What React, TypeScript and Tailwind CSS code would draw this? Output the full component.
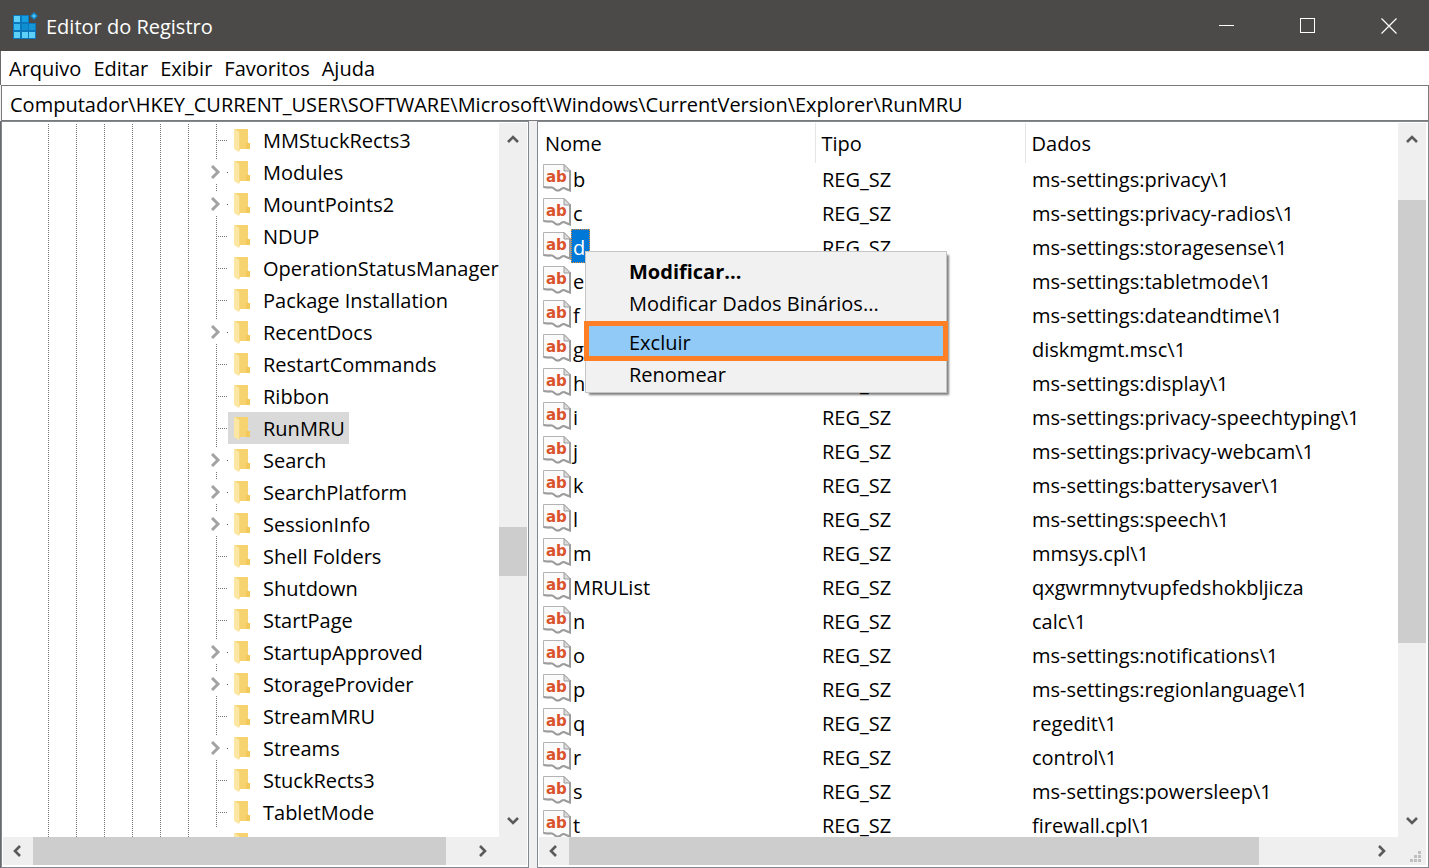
import { ReactNode } from 'react';
import clsx from 'clsx';

const menus = ['Arquivo', 'Editar', 'Exibir', 'Favoritos', 'Ajuda'];

const keys: { name: string; expandable?: boolean; selected?: boolean }[] = [
  { name: 'MMStuckRects3' },
  { name: 'Modules', expandable: true },
  { name: 'MountPoints2', expandable: true },
  { name: 'NDUP' },
  { name: 'OperationStatusManager' },
  { name: 'Package Installation' },
  { name: 'RecentDocs', expandable: true },
  { name: 'RestartCommands' },
  { name: 'Ribbon' },
  { name: 'RunMRU', selected: true },
  { name: 'Search', expandable: true },
  { name: 'SearchPlatform', expandable: true },
  { name: 'SessionInfo', expandable: true },
  { name: 'Shell Folders' },
  { name: 'Shutdown' },
  { name: 'StartPage' },
  { name: 'StartupApproved', expandable: true },
  { name: 'StorageProvider', expandable: true },
  { name: 'StreamMRU' },
  { name: 'Streams', expandable: true },
  { name: 'StuckRects3' },
  { name: 'TabletMode' },
];

const values = [
  ['b', 'ms-settings:privacy\\1'],
  ['c', 'ms-settings:privacy-radios\\1'],
  ['d', 'ms-settings:storagesense\\1'],
  ['e', 'ms-settings:tabletmode\\1'],
  ['f', 'ms-settings:dateandtime\\1'],
  ['g', 'diskmgmt.msc\\1'],
  ['h', 'ms-settings:display\\1'],
  ['i', 'ms-settings:privacy-speechtyping\\1'],
  ['j', 'ms-settings:privacy-webcam\\1'],
  ['k', 'ms-settings:batterysaver\\1'],
  ['l', 'ms-settings:speech\\1'],
  ['m', 'mmsys.cpl\\1'],
  ['MRUList', 'qxgwrmnytvupfedshokbljicza'],
  ['n', 'calc\\1'],
  ['o', 'ms-settings:notifications\\1'],
  ['p', 'ms-settings:regionlanguage\\1'],
  ['q', 'regedit\\1'],
  ['r', 'control\\1'],
  ['s', 'ms-settings:powersleep\\1'],
  ['t', 'firewall.cpl\\1'],
];

function AppIcon() {
  return (
    <svg width="26" height="28" viewBox="0 0 26 28" aria-hidden="true">
      <path d="M1 3h16v8h7v16H1z" fill="#0b78bd" />
      <path d="M2 4h6v6H2z" fill="#5fd0fa" />
      <path d="M10 4h6v6h-6z" fill="#169fe0" />
      <path d="M2 12h6v6H2z" fill="#38b9f0" />
      <path d="M10 12h6v6h-6z" fill="#0f8fd2" />
      <path d="M17 12h6v6h-6z" fill="#1596d8" />
      <path d="M2 20h6v6H2z" fill="#5fd0fa" />
      <path d="M10 20h6v6h-6z" fill="#5fd0fa" />
      <path d="M17 20h6v6h-6z" fill="#5fd0fa" />
      <path d="M22 0l4 4-4 4-4-4z" fill="#1583c4" />
      <path d="M22 2l2 2-2 2-2-2z" fill="#52c6f5" />
    </svg>
  );
}

function FolderIcon() {
  return (
    <svg className="shrink-0" width="17" height="25" viewBox="0 0 17 25" aria-hidden="true">
      <path d="M1 1h13v14l2 1v5H5z" fill="#f7d36f" />
      <path d="M12 15h4v6h-4z" fill="#f3c95c" />
      <path d="M0 1h1l4 3v20l-5-3z" fill="#fbe7a3" />
      <path d="M5 4v20l1-3V4z" fill="#f5d981" />
    </svg>
  );
}

function StringIcon() {
  return (
    <svg className="shrink-0" width="28" height="28" viewBox="0 0 28 28" aria-hidden="true">
      <path
        d="M.5.5H21l6.500 6.500V27l-4-1.500c-2-1.500-4-1-5.500.5-2 1.500-4.500 1-6-.5-2-2-4-2-6-1.500L.5 23.500z"
        fill="#fbfbfb"
        stroke="#b4b4b4"
      />
      <path d="M27 6v20.500l-4-1.500c-2-1.500-4-1-5.500.5-2 1.500-4.500 1-6-.5-2-2-4-2-6-1.500L.5 23" fill="none" stroke="#9b9b9b" strokeWidth="2" />
      <path d="M21 .5V7h6.500z" fill="#dcdcdc" stroke="#9b9b9b" />
      <text x="3" y="18" fontSize="15" fontWeight="700" fontFamily="DejaVu Sans" fill="#d9532c">
        ab
      </text>
    </svg>
  );
}

function Arrow({ dir }: { dir: 'up' | 'down' | 'left' | 'right' }) {
  const points = {
    up: '2,10 7,5 12,10',
    down: '2,4 7,9 12,4',
    left: '9,2 4,7 9,12',
    right: '5,2 10,7 5,12',
  };
  return (
    <svg width="14" height="14" viewBox="0 0 14 14" aria-hidden="true">
      <polyline points={points[dir]} fill="none" stroke="#5a5a5a" strokeWidth="2.600" />
    </svg>
  );
}

function VerticalBar({ thumb }: { thumb: ReactNode }) {
  return (
    <div className="flex w-7 shrink-0 flex-col bg-[#efefef]">
      <button aria-label="Para cima" className="flex h-8 items-center justify-center">
        <Arrow dir="up" />
      </button>
      {thumb}
      <button aria-label="Para baixo" className="flex h-8 items-center justify-center">
        <Arrow dir="down" />
      </button>
    </div>
  );
}

function HorizontalBar({ thumb, children }: { thumb: ReactNode; children?: ReactNode }) {
  return (
    <div className="flex h-7 shrink-0 bg-[#efefef]">
      <button aria-label="Para a esquerda" className="flex w-[30px] items-center justify-center">
        <Arrow dir="left" />
      </button>
      {thumb}
      <button aria-label="Para a direita" className="flex w-[30px] items-center justify-center">
        <Arrow dir="right" />
      </button>
      <div className="flex w-[30px] items-end justify-end">{children}</div>
    </div>
  );
}

function Dots({ className }: { className?: string }) {
  return <span className={clsx('w-px bg-[repeating-linear-gradient(#777_0_1px,transparent_1px_2px)]', className)} />;
}

function Guides() {
  return (
    <span className="flex shrink-0 gap-[27px] self-stretch pl-[45px]">
      <Dots />
      <Dots />
      <Dots />
      <Dots />
      <Dots />
      <Dots />
    </span>
  );
}

function KeyTree() {
  return (
    <ul className="min-w-0 flex-1 overflow-hidden pt-px">
      {keys.map((key) => (
        <li key={key.name} className="flex h-8 items-center">
          <Guides />
          {key.expandable ? (
            <span className="flex w-[39px] shrink-0 items-center self-stretch pl-[21px]">
              <button aria-label={`Expandir ${key.name}`} className="flex h-full w-3 flex-col items-center justify-between">
                <Dots className="h-1" />
                <svg width="12" height="14" viewBox="0 0 12 14" aria-hidden="true">
                  <polyline points="2,1 8,7 2,13" fill="none" stroke="#a3a3a3" strokeWidth="3" />
                </svg>
                <Dots className="h-1" />
              </button>
              <span className="ml-auto h-px w-px bg-[#555]" />
            </span>
          ) : (
            <span className="flex w-[39px] shrink-0 items-center self-stretch pl-[27px]">
              <Dots className="self-stretch" />
              <span className="ml-px h-px flex-1 bg-[repeating-linear-gradient(90deg,#777_0_1px,transparent_1px_2px)]" />
            </span>
          )}
          <button className={clsx('flex h-8 shrink-0 items-center gap-3 pr-1 pl-[6px]', key.selected && 'bg-[#d9d9d9]')}>
            <FolderIcon />
            <span className="pt-0.5 whitespace-nowrap">{key.name}</span>
          </button>
        </li>
      ))}
      <li className="flex h-8">
        <Guides />
        <span className="pt-1 pl-[45px]">
          <FolderIcon />
        </span>
      </li>
    </ul>
  );
}

function ContextMenu() {
  return (
    <div className="absolute top-[22px] left-3.5 z-10 w-[362px] border border-[#c6c6c6] bg-[#f1f1f1] pt-1 pb-px text-black shadow-[3px_3px_2px_-1px_rgba(0,0,0,0.5)]">
      <button className="block h-8 w-full pl-[43px] text-left leading-8 font-bold">Modificar...</button>
      <button className="block h-8 w-full pl-[43px] text-left leading-8">Modificar Dados Binários...</button>
      <button className="relative mt-[7px] block h-8 w-full pl-[43px] text-left leading-8">
        <span className="absolute -inset-x-0.5 -top-1.5 -bottom-0.5 border-5 border-[#ff7f27] bg-[#91c9f7]" />
        <span className="relative">Excluir</span>
      </button>
      <button className="block h-8 w-full pl-[43px] text-left leading-8">Renomear</button>
    </div>
  );
}

function ValueTable() {
  return (
    <div className="min-w-0 flex-1 overflow-hidden">
      <table className="w-full table-fixed">
        <thead>
          <tr className="h-10 text-left">
            <th className="w-[276px] border-r border-[#e5e5e5] pt-0.5 pl-[6px] font-normal">Nome</th>
            <th className="w-[210px] border-r border-[#e5e5e5] pt-0.5 pl-[6px] font-normal">Tipo</th>
            <th className="pt-0.5 pl-[6px] font-normal">Dados</th>
          </tr>
        </thead>
        <tbody>
          {values.map(([name, data]) => (
            <tr key={name} className="h-[34px]">
              <td className="p-0 pl-1">
                <div className="flex h-[34px] items-center">
                  <span className="self-start pt-px">
                    <StringIcon />
                  </span>
                  {name === 'd' ? (
                    <div className="relative -mt-1">
                      <span className="block h-[34px] w-[19px] border border-dotted border-[#e0903c] bg-[#0078d7] pl-px leading-9 text-white">
                        {name}
                      </span>
                      <ContextMenu />
                    </div>
                  ) : (
                    <span className="pl-0.5">{name}</span>
                  )}
                </div>
              </td>
              <td className="p-0 pl-[7px]">REG_SZ</td>
              <td className="p-0 pl-[7px] whitespace-nowrap">{data}</td>
            </tr>
          ))}
        </tbody>
      </table>
    </div>
  );
}

export default function App() {
  return (
    <div className="flex h-screen flex-col overflow-hidden bg-[#f0f0f0] font-['Open_Sans','Noto_Sans',sans-serif] text-xl leading-7 text-black">
      <header className="flex h-[51px] shrink-0 items-center bg-[#4c4a48] pl-3 text-white">
        <AppIcon />
        <h1 className="flex-1 pt-0.5 pl-2">Editor do Registro</h1>
        <button aria-label="Minimizar" className="flex h-full w-[81px] items-center justify-center">
          <span className="h-px w-[15px] bg-white" />
        </button>
        <button aria-label="Maximizar" className="flex h-full w-[81px] items-center justify-center">
          <span className="h-[15px] w-[15px] border border-white" />
        </button>
        <button aria-label="Fechar" className="flex h-full w-[81px] items-center justify-center">
          <svg width="16" height="16" viewBox="0 0 16 16" aria-hidden="true">
            <path d="M.5.5l15 15M15.500.5l-15 15" stroke="#fff" strokeWidth="1.200" />
          </svg>
        </button>
      </header>

      <nav className="flex h-[34px] shrink-0 items-center gap-3 border-l border-[#6a6a6a] bg-white pt-0.5 pl-2">
        {menus.map((menu) => (
          <button key={menu}>{menu}</button>
        ))}
      </nav>

      <input
        aria-label="Endereço"
        defaultValue="Computador\HKEY_CURRENT_USER\SOFTWARE\Microsoft\Windows\CurrentVersion\Explorer\RunMRU"
        className="ml-px h-9 shrink-0 border border-[#7a7a7a] bg-white px-2 pt-0.5 outline-none"
      />

      <main className="flex min-h-0 flex-1 gap-2 border-l border-[#6a6a6a]">
        <section className="flex w-[528px] shrink-0 flex-col border border-[#828790] bg-white p-px pb-0.5">
          <div className="flex min-h-0 flex-1">
            <KeyTree />
            <VerticalBar
              thumb={
                <>
                  <div className="flex-[372]" />
                  <div className="flex-[49] bg-[#cdcdcd]" />
                  <div className="flex-[229]" />
                </>
              }
            />
          </div>
          <HorizontalBar
            thumb={
              <>
                <div className="flex-[413] bg-[#cdcdcd]" />
                <div className="flex-[21]" />
              </>
            }
          />
        </section>

        <section className="flex min-w-0 flex-1 flex-col border border-[#828790] bg-white p-px pr-0.5 pb-0.5">
          <div className="flex min-h-0 flex-1">
            <ValueTable />
            <VerticalBar
              thumb={
                <>
                  <div className="flex-[45]" />
                  <div className="flex-[443] bg-[#cdcdcd]" />
                  <div className="flex-[162]" />
                </>
              }
            />
          </div>
          <HorizontalBar
            thumb={
              <>
                <div className="flex-[691] bg-[#cdcdcd]" />
                <div className="flex-[107]" />
              </>
            }
          >
            <svg width="16" height="16" viewBox="0 0 16 16" aria-hidden="true">
              <path d="M8 2h3v3H8zM4 6h3v3H4zM8 6h3v3H8zM0 10h3v3H0zM4 10h3v3H4zM8 10h3v3H8z" fill="#bfbfbf" />
            </svg>
          </HorizontalBar>
        </section>
      </main>
    </div>
  );
}
